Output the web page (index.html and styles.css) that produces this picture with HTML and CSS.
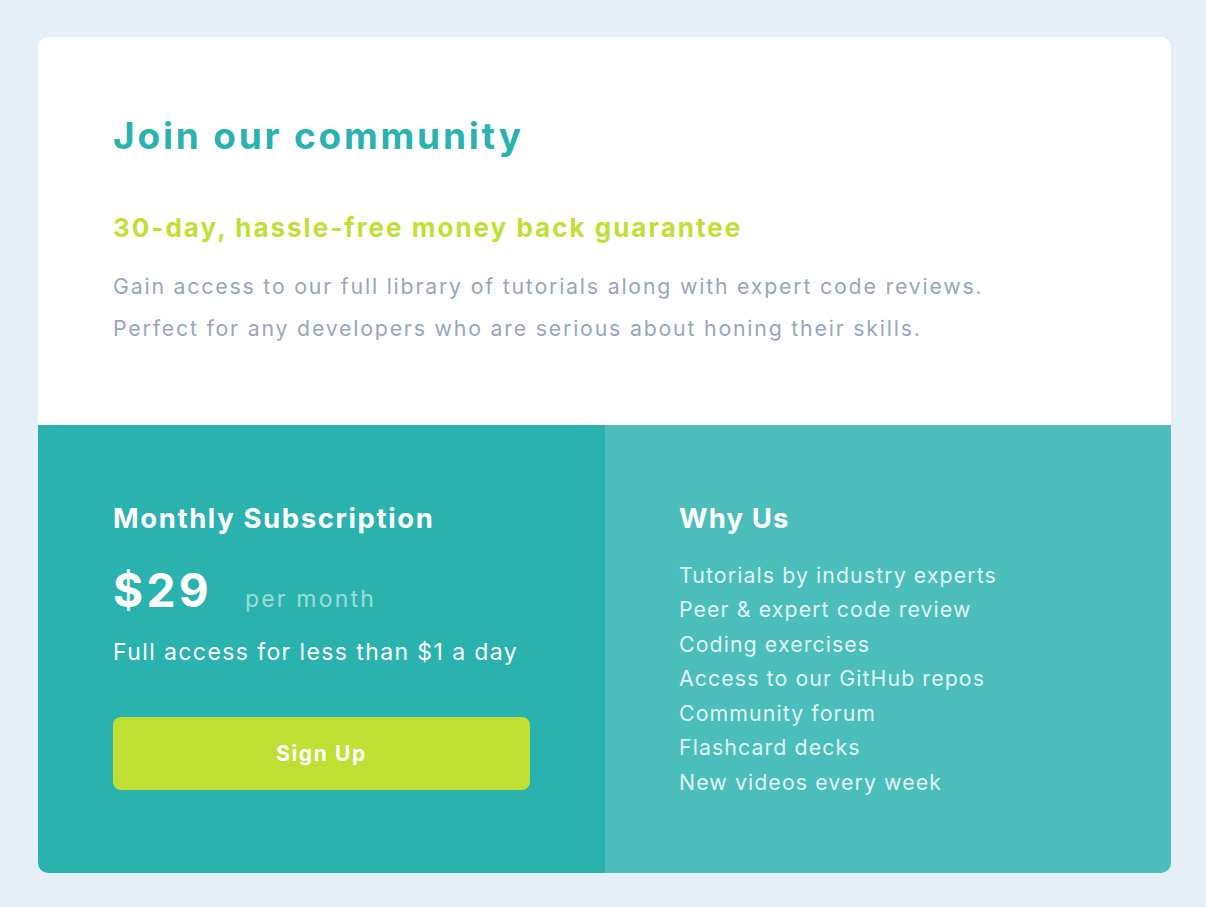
FILE: index.html
```html
<!DOCTYPE html>
<html lang="en">
<head>
<meta charset="utf-8">
<title>Join our community</title>
<link rel="stylesheet" href="styles.css">
</head>
<body>
<main class="card">
  <section class="intro">
    <h1 class="intro-title">Join our community</h1>
    <h2 class="intro-sub">30-day, hassle-free money back guarantee</h2>
    <p class="intro-text">Gain access to our full library of tutorials along with expert code reviews.<br>Perfect for any developers who are serious about honing their skills.</p>
  </section>
  <div class="bottom">
    <section class="sub">
      <h3 class="col-title col-title-wide">Monthly Subscription</h3>
      <div class="price-row">
        <span class="price">$29</span>
        <span class="per">per month</span>
      </div>
      <p class="sub-text">Full access for less than $1 a day</p>
      <button class="btn" type="button">Sign Up</button>
    </section>
    <section class="why">
      <h3 class="col-title">Why Us</h3>
      <ul class="why-list">
        <li>Tutorials by industry experts</li>
        <li>Peer &amp; expert code review</li>
        <li>Coding exercises</li>
        <li>Access to our GitHub repos</li>
        <li>Community forum</li>
        <li>Flashcard decks</li>
        <li>New videos every week</li>
      </ul>
    </section>
  </div>
</main>
</body>
</html>
```
FILE: styles.css
```css
* { box-sizing: border-box; }
html, body { margin: 0; padding: 0; }
body {
  background: #e6eef6;
  font-family: Inter, "Open Sans", "Liberation Sans", sans-serif;
  padding: 37px 35px 34px 38px;
}
.card {
  width: 1133px;
  background: #fff;
  border-radius: 10px;
  overflow: hidden;
}
.intro {
  padding: 76px 75px 76px;
}
.intro-title {
  margin: 0;
  font-size: 37px;
  line-height: 46px;
  font-weight: 700;
  letter-spacing: 2.8px;
  color: #2ab2af;
}
.intro-sub {
  margin: 52.5px 0 0;
  font-size: 26px;
  line-height: 32px;
  font-weight: 700;
  letter-spacing: 2px;
  color: #c0df34;
}
.intro-text {
  margin: 21.3px 0 0;
  font-size: 21.3px;
  line-height: 42px;
  letter-spacing: 1.8px;
  color: #98a6bd;
}
.bottom {
  display: grid;
  grid-template-columns: 567px 566px;
}
.sub {
  background: #2ab2af;
  padding: 76px 75px 83px;
  color: #fff;
}
.why {
  background: #4bbebc;
  padding: 76px 74px 40px;
  color: #fff;
}
.col-title {
  margin: 0;
  font-size: 27.5px;
  line-height: 34px;
  font-weight: 700;
  letter-spacing: 1.1px;
}
.col-title-wide {
  letter-spacing: 1.6px;
}
.price-row {
  margin-top: 29.3px;
  display: flex;
  align-items: baseline;
  gap: 33px;
}
.price {
  font-size: 46px;
  line-height: 52px;
  font-weight: 700;
  letter-spacing: 3.3px;
}
.per {
  font-size: 23px;
  letter-spacing: 2.2px;
  color: rgba(255, 255, 255, 0.55);
}
.sub-text {
  margin: 21.3px 0 0;
  font-size: 23px;
  line-height: 30px;
  letter-spacing: 1.4px;
}
.btn {
  display: block;
  margin-top: 49.4px;
  width: 100%;
  height: 73px;
  border: 0;
  border-radius: 8px;
  background: #c0df34;
  color: #fff;
  font-family: inherit;
  font-size: 21px;
  font-weight: 700;
  letter-spacing: 1.6px;
  cursor: pointer;
}
.why-list {
  list-style: none;
  margin: 23px 0 0;
  padding: 0;
  font-size: 21.3px;
  line-height: 34.5px;
  letter-spacing: 1.1px;
  color: rgba(255, 255, 255, 0.85);
}
```
